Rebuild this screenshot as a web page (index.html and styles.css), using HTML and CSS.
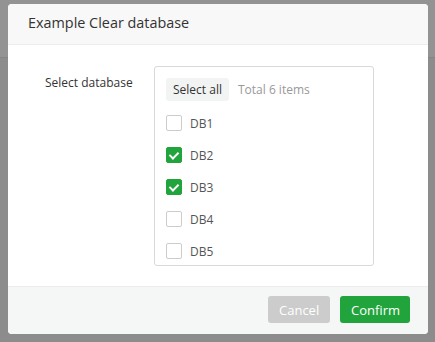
FILE: index.html
```html
<!DOCTYPE html>
<html lang="en">

<head>
	<meta charset="UTF-8">
	<meta name="viewport" content="width=device-width, initial-scale=1.0">
	<title>Clear database</title>
	<link rel="stylesheet" href="styles.css">
</head>

<body>
	<div class="backdrop">
		<div class="backdrop-top"></div>
	</div>
	<div class="dialog">
		<div class="dialog-header">Example Clear database</div>
		<div class="dialog-body">
			<div class="field-label">Select database</div>
			<div class="db-box">
				<div class="db-toolbar">
					<button class="select-all">Select all</button>
					<span class="total">Total 6 items</span>
				</div>
				<ul class="db-list">
					<li><span class="check"></span>DB1</li>
					<li><span class="check checked"></span>DB2</li>
					<li><span class="check checked"></span>DB3</li>
					<li><span class="check"></span>DB4</li>
					<li><span class="check"></span>DB5</li>
				</ul>
			</div>
		</div>
		<div class="dialog-footer">
			<button class="btn cancel">Cancel</button>
			<button class="btn confirm">Confirm</button>
		</div>
	</div>
</body>

</html>
```

FILE: styles.css
```css
body {
	margin: 0;
	font-family: 'Open Sans', 'Noto Sans', sans-serif;
	color: #333;
	height: 342px;
	overflow: hidden;
	background: #8c8c8c;
	position: relative;
}

.backdrop-top {
	height: 57px;
	background: #939393;
	border-bottom: 1px solid #858585;
}

.dialog {
	position: absolute;
	left: 8px;
	top: 4px;
	width: 420px;
	height: 330px;
	background: #fff;
	border-radius: 4px;
	overflow: hidden;
	display: flex;
	flex-direction: column;
}

.dialog-header {
	height: 41px;
	box-sizing: border-box;
	padding: 9px 20px 0;
	font-size: 14.4px;
	background: #f8f8f8;
	border-bottom: 1px solid #ececec;
	color: #333;
}

.dialog-body {
	flex: 1;
	display: flex;
	padding: 21px 0 0 37px;
}

.field-label {
	width: 109px;
	font-size: 12px;
	padding-top: 8px;
	color: #333;
}

.db-box {
	width: 220px;
	height: 200px;
	border: 1px solid #d9d9d9;
	border-radius: 3px;
	box-sizing: border-box;
	padding: 11px 11px 0;
}

.db-toolbar {
	display: flex;
	align-items: center;
	gap: 9px;
}

.select-all {
	font-family: inherit;
	font-size: 12px;
	color: #333;
	background: #f2f3f3;
	border: none;
	border-radius: 3px;
	height: 23px;
	padding: 0 7px;
}

.total {
	font-size: 12px;
	color: #999;
}

.db-list {
	list-style: none;
	margin: 6px 0 0;
	padding: 0;
}

.db-list li {
	height: 32px;
	display: flex;
	align-items: center;
	gap: 8px;
	font-size: 12px;
	color: #555;
}

.check {
	width: 16px;
	height: 16px;
	box-sizing: border-box;
	border: 1px solid #ccc;
	border-radius: 2px;
	background: #fff;
	position: relative;
}

.check.checked {
	background: #22a43c;
	border-color: #22a43c;
}

.check.checked::after {
	content: '';
	position: absolute;
	left: 4px;
	top: 2px;
	width: 4px;
	height: 7px;
	border: solid #fff;
	border-width: 0 2px 2px 0;
	transform: rotate(45deg);
}

.dialog-footer {
	height: 48px;
	box-sizing: border-box;
	background: #f5f7f7;
	border-top: 1px solid #ececec;
	display: flex;
	justify-content: flex-end;
	align-items: center;
	gap: 10px;
	padding: 0 18px 2px 0;
}

.btn {
	font-family: inherit;
	font-size: 13px;
	color: #fff;
	border: none;
	border-radius: 3px;
	height: 27px;
	padding: 0 11px;
}

.cancel {
	background: #cccccc;
	width: 62px;
}

.confirm {
	background: #22a43c;
	width: 70px;
}
```
